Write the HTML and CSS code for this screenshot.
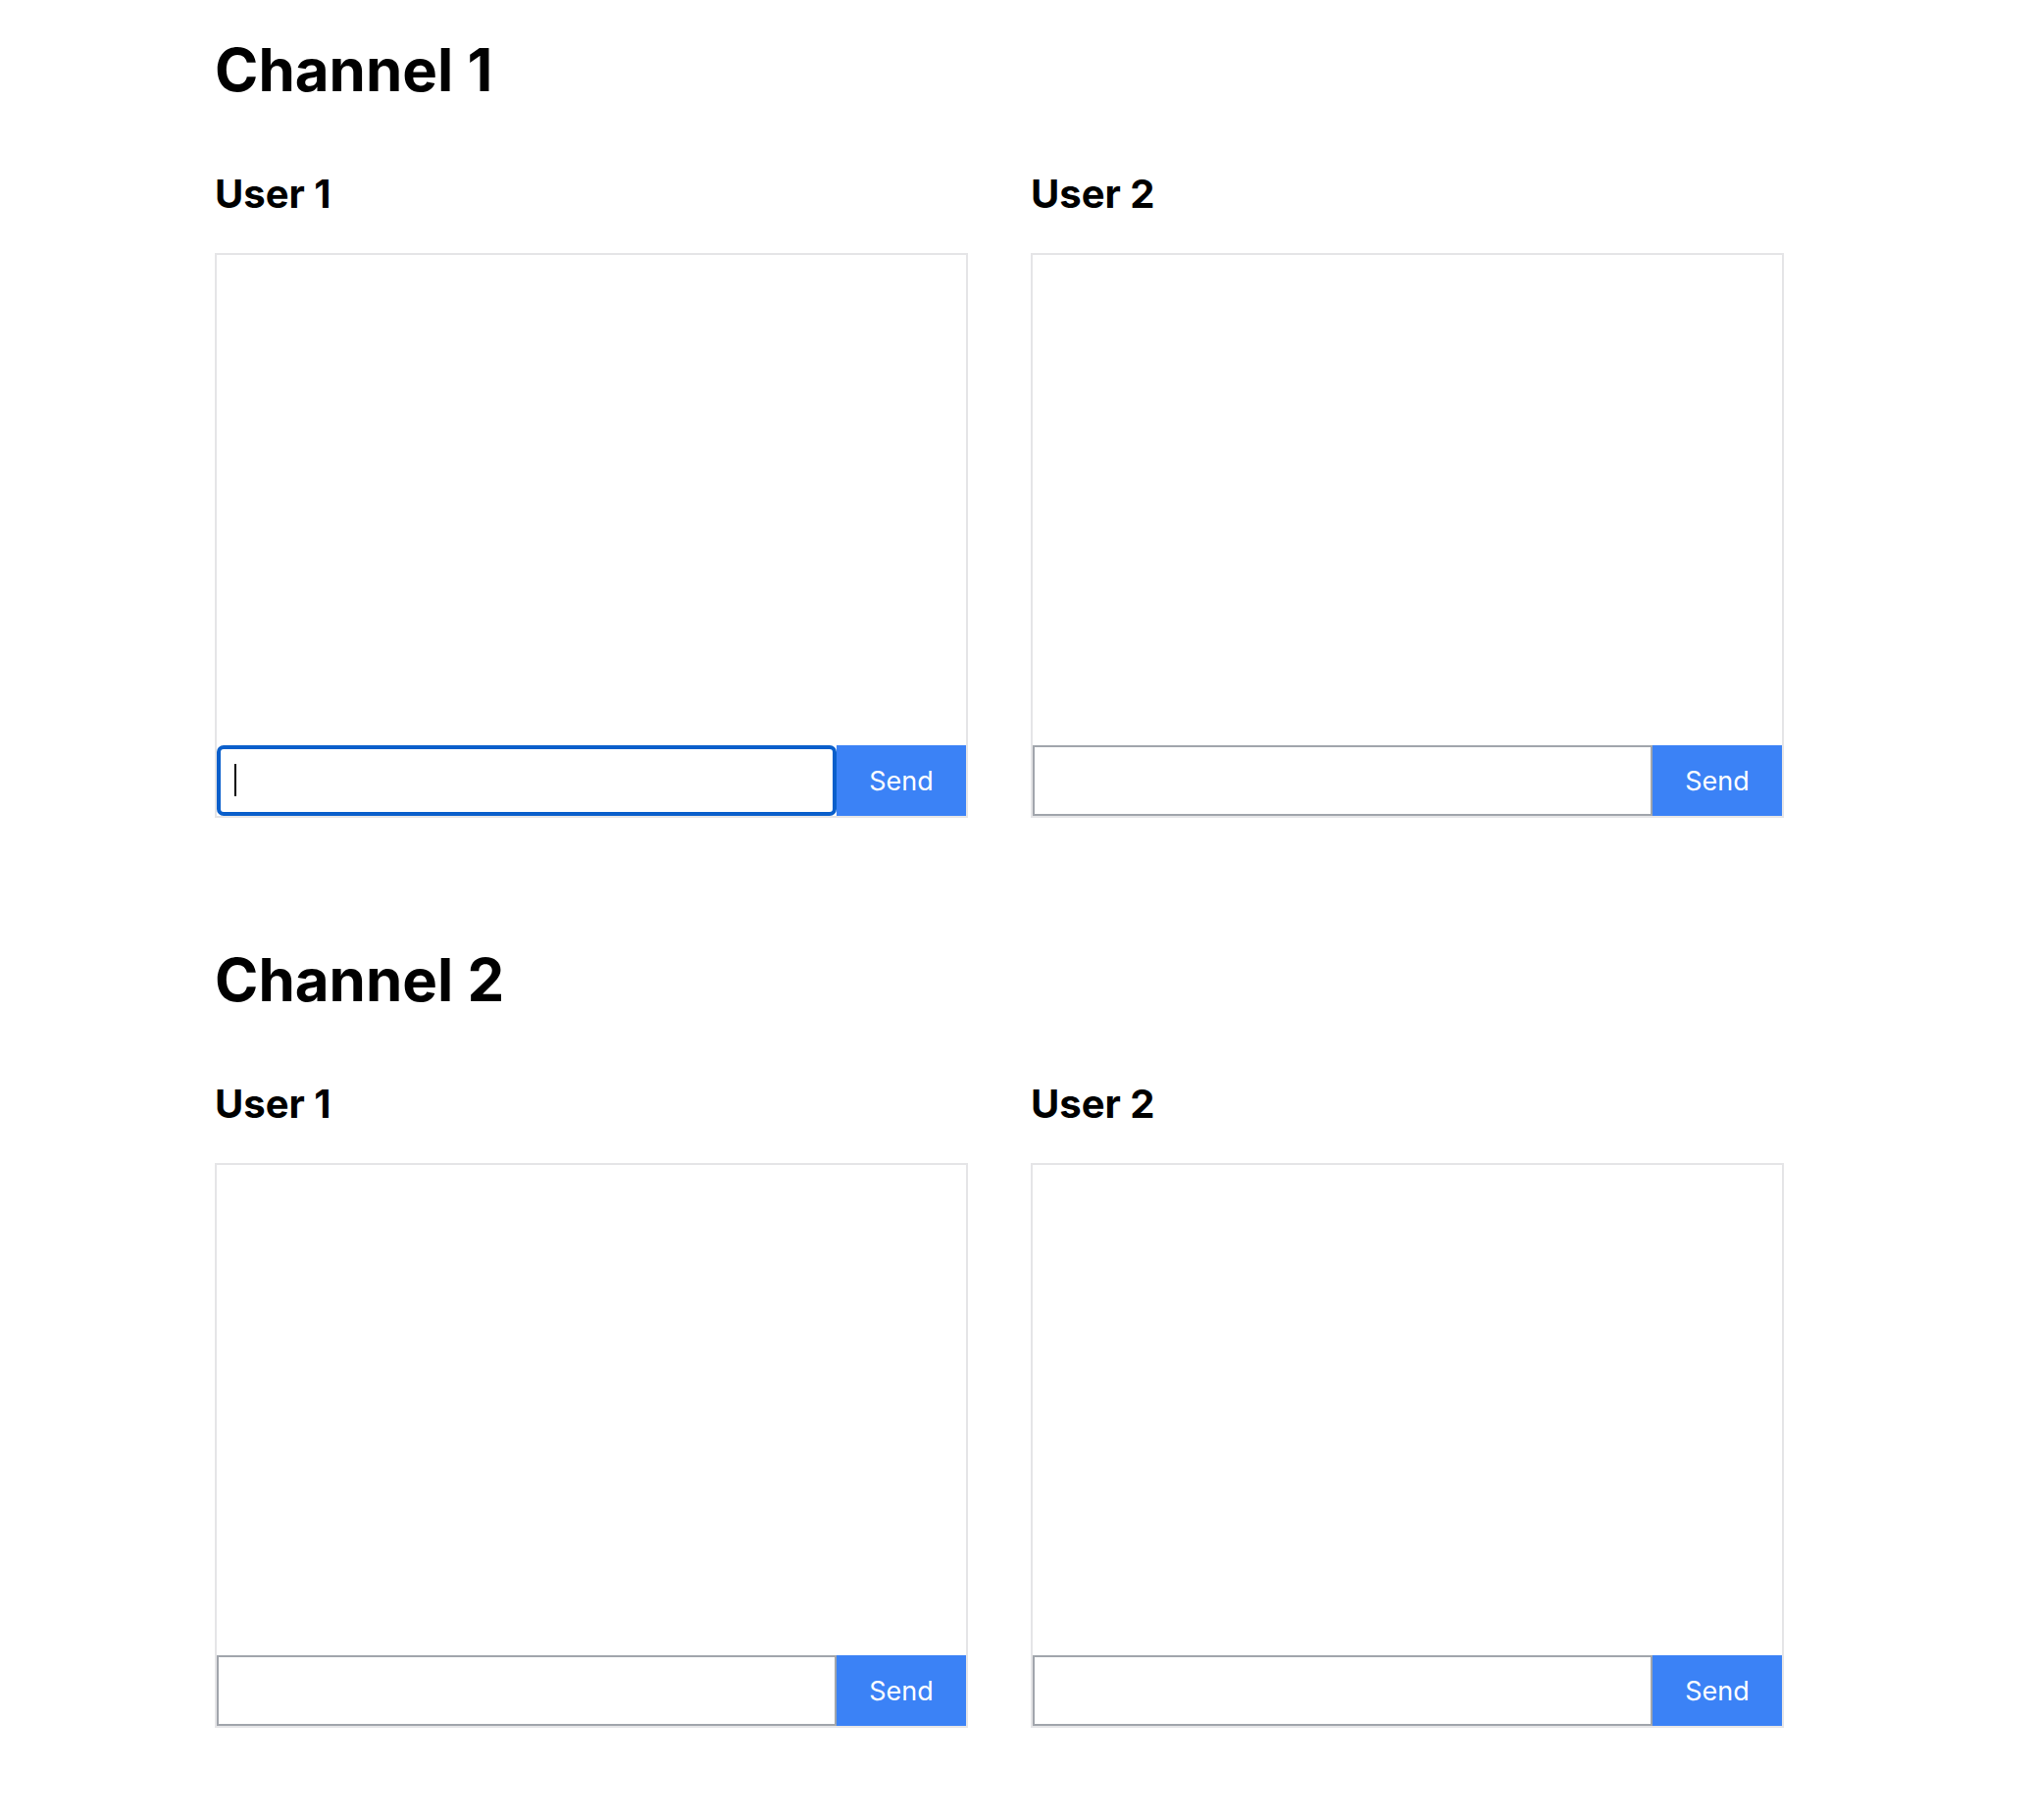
FILE: index.html
```html
<!DOCTYPE html>
<html lang="en">
<head>
    <meta charset="UTF-8">
    <meta name="viewport" content="width=device-width, initial-scale=1.0">
    <title>Channels</title>
    <link rel="stylesheet" href="styles.css">
</head>
<body>

    <main class="page">

        <section class="channel">
            <h1 class="channel-title">Channel 1</h1>
            <div class="users">
                <div class="user">
                    <h2 class="user-name">User 1</h2>
                    <div class="chat">
                        <div class="messages"></div>
                        <form class="send-form" action="#">
                            <div class="input-wrap">
                                <input class="message-input focused" type="text">
                                <span class="caret"></span>
                            </div>
                            <button class="send-button" type="button">Send</button>
                        </form>
                    </div>
                </div>
                <div class="user">
                    <h2 class="user-name">User 2</h2>
                    <div class="chat">
                        <div class="messages"></div>
                        <form class="send-form" action="#">
                            <div class="input-wrap">
                                <input class="message-input" type="text">
                            </div>
                            <button class="send-button" type="button">Send</button>
                        </form>
                    </div>
                </div>
            </div>
        </section>

        <section class="channel">
            <h1 class="channel-title">Channel 2</h1>
            <div class="users">
                <div class="user">
                    <h2 class="user-name">User 1</h2>
                    <div class="chat">
                        <div class="messages"></div>
                        <form class="send-form" action="#">
                            <div class="input-wrap">
                                <input class="message-input" type="text">
                            </div>
                            <button class="send-button" type="button">Send</button>
                        </form>
                    </div>
                </div>
                <div class="user">
                    <h2 class="user-name">User 2</h2>
                    <div class="chat">
                        <div class="messages"></div>
                        <form class="send-form" action="#">
                            <div class="input-wrap">
                                <input class="message-input" type="text">
                            </div>
                            <button class="send-button" type="button">Send</button>
                        </form>
                    </div>
                </div>
            </div>
        </section>

    </main>

</body>
</html>
```

FILE: styles.css
```css
body{
    margin: 0;
    background-color: white;
    color: black;
    font-family: Inter, "Noto Sans", sans-serif;
}

.page{
    display: flex;
    flex-direction: column;
    gap: 94px;
    padding-left: 219px;
}

.channel{
    padding-top: 35px;
}

.channel-title{
    margin: 0 0 67px 0;
    font-size: 60px;
    line-height: 72px;
    font-weight: 700;
}

.users{
    display: grid;
    grid-template-columns: 768px 768px;
    column-gap: 64px;
}

.user-name{
    margin: 0 0 36px 0;
    font-size: 40px;
    line-height: 48px;
    font-weight: 700;
}

.chat{
    display: flex;
    flex-direction: column;
    box-sizing: border-box;
    height: 576px;
    border: 2px solid #e5e5e7;
}

.messages{
    flex: 1;
}

.send-form{
    display: flex;
    height: 72px;
    margin: 0;
}

.input-wrap{
    position: relative;
    display: flex;
    flex: 1;
}

.message-input{
    flex: 1;
    box-sizing: border-box;
    width: 100%;
    height: 72px;
    margin: 0;
    padding: 0 16px;
    border: 2px solid #a1a5ac;
    border-radius: 0;
    outline: none;
    font-family: Inter, sans-serif;
    font-size: 27px;
}

.message-input.focused{
    border: 4px solid #0a5fcb;
    border-radius: 7px;
    padding-left: 14px;
}

.caret{
    position: absolute;
    left: 18px;
    top: 19px;
    width: 2px;
    height: 33px;
    background-color: black;
}

.send-button{
    width: 132px;
    height: 72px;
    border: 0;
    border-radius: 0;
    background-color: #3b82f6;
    color: white;
    font-family: Inter, sans-serif;
    font-size: 27px;
}
```
